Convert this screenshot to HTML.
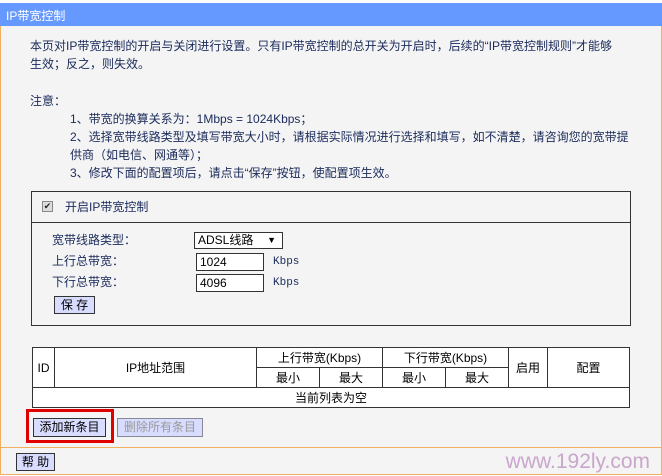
<!DOCTYPE html><html><head><meta charset="utf-8"><style>
*{margin:0;padding:0;box-sizing:border-box}
body{width:662px;height:476px;background:#fff;font-family:"Liberation Sans","Noto Sans CJK SC",sans-serif;font-size:12px;color:#1a2a5a;position:relative;overflow:hidden}
.a{position:absolute}
.frame{left:0;top:3px;width:662px;height:472px;background:#f4f4f4;border:1px solid #f0b060}
.title{left:0;top:3px;width:662px;height:23px;background:#6699ff;color:#fff;padding:4px 6px;font-size:12px}
.t{white-space:nowrap;line-height:18px}
.box{border:1px solid #333}
.in{background:#fff;border:1px solid #333;padding:1px 3px;font-size:12px;color:#000}
.btn{background:#d8dcff;border:1px solid #333;text-align:center;font-size:12px;color:#000;line-height:16px}
table{border-collapse:collapse;position:absolute;left:32px;top:347px;width:598px}
td{border:1px solid #333;text-align:center;height:20px;font-size:12px;color:#000;background:#fff}
</style></head><body>
<div class="a frame"></div>
<div class="a title">IP带宽控制</div>
<div class="a t" style="left:30px;top:37px">本页对IP带宽控制的开启与关闭进行设置。只有IP带宽控制的总开关为开启时，后续的“IP带宽控制规则”才能够</div>
<div class="a t" style="left:30px;top:55px">生效；反之，则失效。</div>
<div class="a t" style="left:30px;top:92px">注意：</div>
<div class="a t" style="left:70px;top:110px">1、带宽的换算关系为：1Mbps = 1024Kbps；</div>
<div class="a t" style="left:70px;top:128px">2、选择宽带线路类型及填写带宽大小时，请根据实际情况进行选择和填写，如不清楚，请咨询您的宽带提</div>
<div class="a t" style="left:70px;top:146px">供商（如电信、网通等）；</div>
<div class="a t" style="left:70px;top:164px">3、修改下面的配置项后，请点击“保存”按钮，使配置项生效。</div>
<div class="a box" style="left:31px;top:191px;width:600px;height:135px"></div>
<div class="a" style="left:31px;top:222px;width:600px;height:1px;background:#333"></div>
<div class="a" style="left:42px;top:201px;width:11px;height:11px;border:1px solid #888;background:#ddd;font-size:9px;line-height:9px;text-align:center;color:#222">✔</div>
<div class="a t" style="left:65px;top:198px">开启IP带宽控制</div>
<div class="a t" style="left:52px;top:231px">宽带线路类型：</div>
<div class="a t" style="left:52px;top:252px">上行总带宽：</div>
<div class="a t" style="left:52px;top:273px">下行总带宽：</div>
<div class="a in" style="left:194px;top:232px;width:89px;height:17px;line-height:13px">ADSL线路 <span style="position:absolute;right:6px;font-size:9px">▼</span></div>
<div class="a in" style="left:196px;top:253px;width:68px;height:18px;line-height:14px">1024</div>
<div class="a in" style="left:196px;top:274px;width:68px;height:18px;line-height:14px">4096</div>
<div class="a t" style="left:273px;top:253px;font-size:11px;font-family:'Liberation Mono',monospace">Kbps</div>
<div class="a t" style="left:273px;top:274px;font-size:11px;font-family:'Liberation Mono',monospace">Kbps</div>
<div class="a btn" style="left:54px;top:296px;width:41px;height:18px">保 存</div>
<table>
<tr><td rowspan="2" style="width:22px">ID</td><td rowspan="2" style="width:202px">IP地址范围</td><td colspan="2">上行带宽(Kbps)</td><td colspan="2">下行带宽(Kbps)</td><td rowspan="2" style="width:39px">启用</td><td rowspan="2">配置</td></tr>
<tr><td style="width:63px">最小</td><td style="width:63px">最大</td><td style="width:63px">最小</td><td style="width:63px">最大</td></tr>
<tr><td colspan="8">当前列表为空</td></tr>
</table>
<div class="a" style="left:26px;top:409px;width:88px;height:34px;border:3px solid #e00000"></div>
<div class="a btn" style="left:33px;top:418px;width:73px;height:19px">添加新条目</div>
<div class="a btn" style="left:117px;top:418px;width:86px;height:19px;color:#999;border-color:#889">删除所有条目</div>
<div class="a" style="left:0;top:447px;width:662px;height:1px;background:#f0b060"></div>
<div class="a btn" style="left:16px;top:453px;width:39px;height:18px">帮 助</div>
<div class="a t" style="right:12px;top:449px;font-size:21px;line-height:26px;color:#c9a6cc">www.192ly.com</div>
</body></html>
